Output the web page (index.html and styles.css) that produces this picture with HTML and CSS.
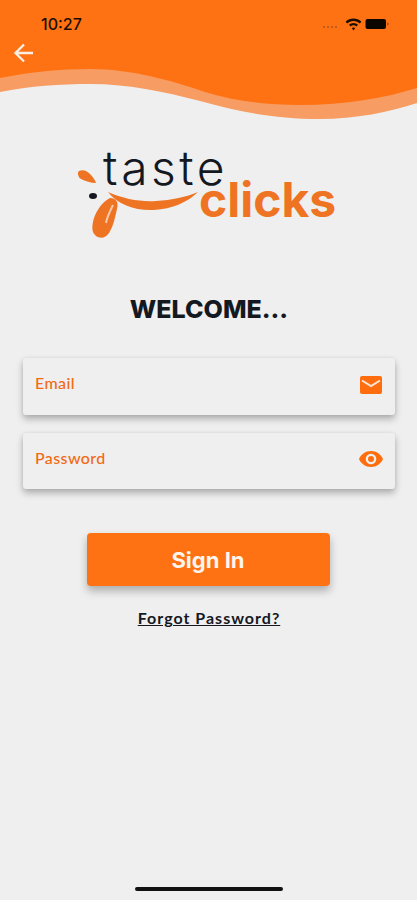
FILE: index.html
```html
<!DOCTYPE html>
<html lang="en">
<head>
<meta charset="utf-8">
<title>Taste Clicks</title>
<link rel="stylesheet" href="styles.css">
</head>
<body>
<div class="screen">
  <header class="hero">
    <svg class="wave" viewBox="0 0 417 120" width="417" height="120" aria-hidden="true">
      <path class="wave-light" d="M0 92C30 86 60 84 90 84C130 84 165 92 200 101C240 112 275 119 320 119C355 119 390 112 417 103V60H0Z"/>
      <path class="wave-main" d="M0 78C30 72 60 69 90 69C130 69 170 80 205 92C235 101 265 105 300 105C345 105 385 98 417 88V0H0Z"/>
    </svg>
    <div class="status">
      <span class="time">10:27</span>
      <span class="status-icons">
        <svg width="20" height="14" viewBox="0 0 20 14"><circle cx="2" cy="10" r="1" fill="#a8561a"/><circle cx="6" cy="10" r="1" fill="#a8561a"/><circle cx="10" cy="10" r="1" fill="#a8561a"/><circle cx="14" cy="10" r="1" fill="#a8561a"/></svg>
        <svg width="17" height="13" viewBox="0 0 17 13"><path d="M8.5 0.5C5.4 0.5 2.7 1.7 0.6 3.7L2.2 5.4C3.9 3.8 6.1 2.9 8.5 2.9S13.100 3.800 14.800 5.400L16.400 3.700C14.300 1.700 11.600 0.500 8.500 0.500ZM8.500 5C6.800 5 5.200 5.700 4 6.800L5.600 8.500C6.400 7.800 7.400 7.300 8.500 7.300S10.600 7.800 11.400 8.500L13 6.800C11.800 5.700 10.200 5 8.500 5ZM8.500 9.400C7.800 9.400 7.200 9.700 6.800 10.100L8.500 12.500L10.200 10.100C9.800 9.700 9.200 9.400 8.500 9.400Z" fill="#1c0d00"/></svg>
        <svg width="25" height="12" viewBox="0 0 25 12"><rect x="0.500" y="1" width="20.500" height="10" rx="2" fill="#0d0500"/><rect x="22" y="4.500" width="1.500" height="3" rx="0.700" fill="#9c5015"/></svg>
      </span>
    </div>
    <button class="back" aria-label="Back">
      <svg width="22" height="22" viewBox="0 0 22 22"><path d="M20 11H3M11 2.500L2.500 11L11 19.500" fill="none" stroke="#fbeee3" stroke-width="2.300"/></svg>
    </button>
  </header>

  <main class="content">
    <svg class="logo" viewBox="0 -15 270 115" width="270" height="115" role="img" aria-label="taste clicks">
      <path class="orange" d="M7 22C11 20 15 22 18 25C21 28 23 31 24 34C19 34 13 32 9 30C6 28 5 24 7 22Z"/>
      <ellipse cx="21" cy="47" rx="4" ry="3" fill="#15181f"/>
      <path class="orange" d="M36 43C52 50 68 53 84 52C100 51 114 48 126 43C116 53 100 60 82 61C64 62 46 56 36 43Z"/>
      <path class="orange" d="M38 49C44 49 47 53 45 60C43 69 41 78 37 84C34 89 28 90 24 87C19 83 20 76 22 69C25 61 30 53 38 49Z"/>
      <path d="M41 56C38 62 35 68 34 74" fill="none" stroke="#f8c9a6" stroke-width="2"/>
      <text class="logo-taste" x="31" y="36">taste</text>
      <text class="logo-clicks" x="127" y="68">clicks</text>
    </svg>
    <h1 class="title">WELCOME...</h1>
    <div class="field">
      <span class="label">Email</span>
      <svg width="24" height="20" viewBox="0 0 24 20"><rect x="1" y="1" width="22" height="18" rx="2" fill="#ff6d0e"/><path d="M3 5.500L12 11L21 5.500" fill="none" stroke="#f9e7d9" stroke-width="2"/></svg>
    </div>
    <div class="field field-second">
      <span class="label label-second">Password</span>
      <svg width="26" height="18" viewBox="0 0 26 18"><path fill-rule="evenodd" d="M13 1C7.500 1 3 4.300 1 9C3 13.700 7.500 17 13 17S23 13.700 25 9C23 4.300 18.500 1 13 1ZM13 14.300A5.300 5.300 0 1 1 13 3.700A5.300 5.300 0 0 1 13 14.300ZM13 6A3 3 0 1 0 13 12A3 3 0 0 0 13 6Z" fill="#ff6d0e"/></svg>
    </div>
    <button class="signin">Sign In</button>
    <a class="forgot" href="#">Forgot Password?</a>
  </main>
  <div class="home-bar"></div>
</div>
</body>
</html>
```

FILE: styles.css
```css
* { box-sizing: border-box; }
html, body { margin: 0; padding: 0; }
body { background: #efefef; font-family: Lato, "Liberation Sans", sans-serif; }
.screen { position: relative; width: 417px; height: 900px; overflow: hidden; background: #efefef; }
.hero { position: relative; height: 120px; }
.wave { display: block; }
.wave-main { fill: #ff7214; }
.wave-light { fill: #f79c63; }
.status { position: absolute; top: 14px; left: 41px; right: 27px; display: flex; justify-content: space-between; align-items: center; }
.time { font: 500 16px/20px Inter, sans-serif; color: #1c0d00; }
.status-icons { display: flex; align-items: center; gap: 3px; }
.back { position: absolute; left: 13px; top: 42px; width: 22px; height: 22px; padding: 0; border: 0; background: none; }
.back svg { display: block; }
.content { display: flex; flex-direction: column; align-items: center; padding: 14px 22px 0 23px; }
.logo { display: block; margin-left: -5px; }
.orange { fill: #ee7423; }
.logo-taste { font: 300 48px Inter, sans-serif; fill: #15181f; letter-spacing: 3.500px; }
.logo-clicks { font: 700 48px Inter, sans-serif; fill: #ee7423; }
.title { margin: 43px 0 0; font: 800 25px/34px Inter, sans-serif; color: #14181f; }
.field { width: 372px; height: 57px; margin-top: 32px; padding: 0 12px 4px 12px; display: flex; justify-content: space-between; align-items: center; background: #efefef; border-radius: 3px; box-shadow: 0 4px 7px rgba(0,0,0,.28), 0 0 4px rgba(0,0,0,.06); }
.field-second { margin-top: 18px; height: 56px; padding-right: 11px; }
.label { font: 500 16px/20px Lato, sans-serif; letter-spacing: 0.400px; color: #f26a12; margin-top: -4px; }
.label-second { margin-top: -2px; }
.signin { width: 243px; height: 53px; margin: 44px 2px 0 0; border: 0; border-radius: 4px; background: #ff7214; color: #fdf5ee; font: 700 22px/26px Inter, sans-serif; box-shadow: 0 5px 9px rgba(0,0,0,.28); }
.forgot { margin-top: 22px; font: 700 16px/20px Lato, sans-serif; color: #15181f; text-decoration: underline; letter-spacing: 1px; }
.home-bar { position: absolute; left: 135px; top: 887px; width: 148px; height: 4px; border-radius: 2px; background: #111; }
```
